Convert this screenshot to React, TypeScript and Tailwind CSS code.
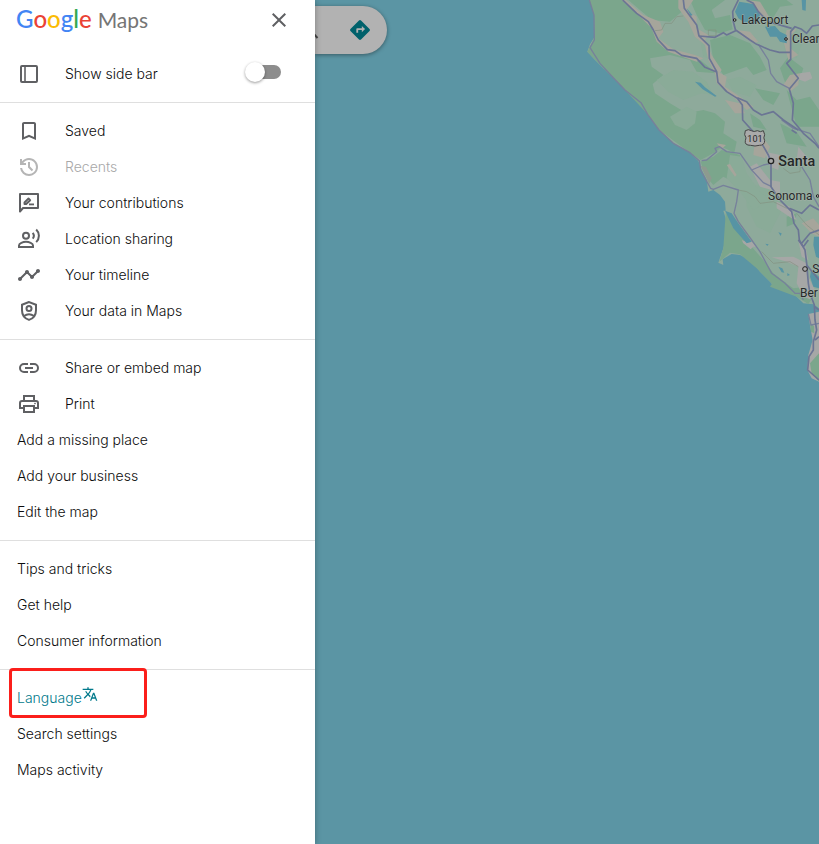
import type { ReactNode } from 'react';
import { MdBookmarkBorder, MdClose, MdTimeline, MdTranslate } from 'react-icons/md';

const symbol = 'h-6 w-6 shrink-0 fill-current';

function SideBarIcon() {
  return (
    <svg viewBox="0 0 24 24" className="h-6 w-6 shrink-0" fill="none" stroke="currentColor" aria-hidden="true">
      <rect x="4" y="4" width="16" height="16" rx="1" strokeWidth="2" />
      <path d="M8 4v16" strokeWidth="1.600" />
    </svg>
  );
}

function HistoryIcon() {
  return (
    <svg viewBox="0 -960 960 960" className={symbol} aria-hidden="true">
      <path d="M480-120q-138 0-240.500-91.500T122-440h82q14 104 92.500 172T480-200q117 0 198.500-81.500T760-480q0-117-81.500-198.500T480-760q-69 0-129 32t-101 88h110v80H120v-240h80v94q51-64 124.500-99T480-840q75 0 140.500 28.500t114 77q48.500 48.500 77 114T840-480q0 75-28.500 140.500t-77 114q-48.500 48.500-114 77T480-120Zm112-192L440-464v-216h80v184l128 128-56 56Z" />
    </svg>
  );
}

function ContributionIcon() {
  return (
    <svg viewBox="0 0 24 24" className="h-6 w-6 shrink-0" fill="none" stroke="currentColor" aria-hidden="true">
      <path d="M3 20.500V3h18v14H6z" strokeWidth="2" strokeLinejoin="round" />
      <path d="M7.500 13v-1.500l4-4 1.700 1.700-4 3.800z" strokeWidth="1.900" strokeLinejoin="round" />
      <path d="M12 13.400h5" strokeWidth="1.800" />
    </svg>
  );
}

function SharingIcon() {
  return (
    <svg viewBox="0 0 24 24" className="h-6 w-6 shrink-0" fill="none" stroke="currentColor" strokeWidth="2" aria-hidden="true">
      <circle cx="9" cy="8.800" r="3" />
      <path d="M2 20v-1.500c0-2.300 4-3.700 7-3.700s7 1.400 7 3.700V20z" />
      <path d="M15.700 5.900c1.500 1.800 1.500 4 0 5.800M19.200 2.500c3.600 3.500 3.600 9 0 12.600" />
    </svg>
  );
}

function ShieldIcon() {
  return (
    <svg viewBox="0 0 24 24" className="h-6 w-6 shrink-0" fill="none" stroke="currentColor" strokeWidth="2" aria-hidden="true">
      <path d="M12 3 5 5.700v5.500c0 4.500 2.900 8.300 7 9.700 4.100-1.400 7-5.200 7-9.700V5.700z" />
      <circle cx="12" cy="9.600" r="2.500" />
      <path d="M7 17c3-2.200 7-2.200 10 0" />
    </svg>
  );
}

function LinkIcon() {
  return (
    <svg viewBox="0 0 24 24" className="h-6 w-6 shrink-0" fill="none" stroke="currentColor" strokeWidth="2" aria-hidden="true">
      <path d="M11 8H7a4 4 0 0 0 0 8h4M13 8h4a4 4 0 0 1 0 8h-4M8 12h8" />
    </svg>
  );
}

function PrintIcon() {
  return (
    <svg viewBox="0 0 24 24" className="h-6 w-6 shrink-0" fill="none" stroke="currentColor" strokeWidth="2" aria-hidden="true">
      <path d="M7 8V4h10v4M7 16H3v-5a2 2 0 0 1 2-2h14a2 2 0 0 1 2 2v5h-4" />
      <path d="M7 14h10v6H7z" />
      <circle cx="18" cy="11.500" r="0.500" strokeWidth="1" />
    </svg>
  );
}

function Item({ icon, children, disabled = false }: { icon?: ReactNode; children: ReactNode; disabled?: boolean }) {
  return (
    <li>
      <button
        type="button"
        disabled={disabled}
        className={`flex h-9 w-full items-center px-[17px] text-left ${disabled ? 'text-[#a8a8a8]' : 'text-[#0c0c0c]'}`}
      >
        {icon && <span className={`mr-6 ${disabled ? 'text-[#b5b5b5]' : 'text-[#5f6063]'}`}>{icon}</span>}
        {children}
      </button>
    </li>
  );
}

function Group({ children }: { children: ReactNode }) {
  return <ul className="border-t border-[#dfdfdf] py-[10px]">{children}</ul>;
}

function Terrain() {
  return (
    <svg
      viewBox="0 0 717 1170"
      className="absolute top-0 right-0 h-[390px] w-[239px]"
      role="img"
      aria-label="Northern California coast"
    >
      <path
        fill="#8eaa9b"
        d="M28 0 42 45 44 110 30 133 22 155 45 180 70 205 105 230 140 275 185 310 205 345 235 388 280 430 330 458 355 483 365 510 380 540 385 575 400 570 420 585 435 605 437 632 430 632 445 680 430 745 415 788 430 795 428 778 455 762 480 765 515 782 540 815 570 845 585 863 600 853 625 870 650 890 670 910 700 913 717 925V0z"
      />
      <g fill="#7ba68c">
        <path d="M28 0 42 45 44 110 22 155 70 205 140 275 205 345 235 388 330 458 362 480 408 455 425 440 463 458 470 425 430 400 435 365 405 340 370 330 320 340 270 310 225 280 218 252 250 225 215 200 210 175 270 165 330 180 350 215 410 220 352 173 265 150 235 120 225 80 180 45 130 0z" />
        <path d="M145 0 215 60 270 65 305 35 309 0zM330 0 350 45 375 90 420 100 458 88 450 45 405 55 395 30 435 0zM390 120 450 105 510 130 540 170 560 210 520 225 500 200 430 225 400 180z" />
        <path d="M362 485 400 470 425 450 480 465 475 515 450 540 430 530 400 555 375 525zM437 640 430 745 418 785 450 758 480 763 530 805 585 860 620 850 580 820 550 780 515 740 480 690zM500 0 540 45 575 60 600 20 640 15 620 0zM600 205 625 170 670 205 655 250 620 260zM620 270 650 300 690 290 717 330V380H650zM525 265 600 280 580 315 550 300zM570 860 650 890 685 912 700 890 680 860 640 865 590 830z" />
        <path d="M620 650 650 640 645 670 620 680zM510 340 540 360 560 390 520 380zM600 370 650 395 680 440 620 430z" />
      </g>
      <g fill="#8aab98">
        <path d="M230 240 280 210 340 215 380 245 400 285 365 280 310 300 265 275zM270 350 320 320 350 335 345 370 320 390 285 375zM440 240 480 230 530 255 510 290 460 275zM600 90 640 80 670 120 650 175 615 150zM500 560 590 550 610 620 570 700 530 680 500 620z" />
        <path d="M450 465 485 470 500 520 540 575 570 600 520 630 480 575 440 535zM360 120 390 150 400 180 370 170z" />
      </g>
      <g fill="#a6a59b">
        <path d="M138 0 190 45 240 65 250 95 235 115 280 148 345 165 370 175 350 185 265 155 230 125 215 85 175 45 125 0zM295 0 340 0 320 30 350 50 350 85 385 105 375 120 395 165 425 210 410 230 385 180 375 135 345 110 325 65 295 25z" />
        <path d="M405 210 440 230 435 260 480 290 520 320 500 330 470 300 410 250zM435 300 480 310 495 340 465 340zM470 90 510 95 535 125 520 130 480 105zM620 90 650 88 630 110 632 145 655 165 625 180 612 130zM500 0 540 5 570 55 540 50zM630 225 660 220 655 255 630 275 610 255z" />
        <path d="M525 420 550 415 570 440 555 475 520 465zM665 670 700 655 717 675V710L695 700zM410 430 438 435 425 447zM440 495 450 492 470 525 465 530z" />
      </g>
      <path fill="#8d9a8f" d="M362 498 378 500 395 535 388 552z" />
      <g fill="#a6a7a6">
        <path d="M510 500 530 490 570 540 600 545 600 590 575 570 540 560zM590 605 630 620 650 660 635 655 590 625zM555 455 600 465 595 510 570 500zM660 220 690 215 697 235 675 245 655 238zM655 440 680 470 700 485 690 500 650 480z" />
        <path d="M485 720 525 735 512 748 490 730zM575 772 640 770 680 790 685 830 705 870 690 898 670 890 650 850 655 800 620 785zM655 720 675 735 685 780 665 770zM480 700 500 710 530 740 515 740z" />
      </g>
      <g fill="#5794a4">
        <path d="M478 5 520 12 540 45 530 70 500 72 475 55 465 35zM555 80 585 78 600 95 620 105 620 130 600 125 590 110 570 110zM665 0 678 0 677 32 667 30zM435 632 455 640 475 670 515 725 500 730 460 685zM345 245 362 248 375 262 410 288 405 290 368 268z" />
        <path d="M320 25 338 45 332 48zM717 710V775L708 770 700 735 702 710zM693 810 717 830V865L700 860 690 830zM595 800 607 805 613 818 605 817zM556 731 566 733 562 738zM595 697 605 700 602 708zM622 819 630 825 622 828z" />
      </g>
      <path fill="#a6a7a6" d="M685 942 717 935V1145L695 1135 682 1110 685 1065 698 1020 690 975z" />
      <path fill="#7ba68c" d="M690 970 702 978 703 1000 693 995zM690 1090 717 1060V1145L695 1120z" />
      <g fill="none" stroke="#82917f" strokeWidth="3" opacity=".65">
        <path d="M225 92 245 90 255 70 275 70 290 50 310 48M385 105V90H408V107H385M475 570 500 575 525 590 540 610 580 605 620 625M610 505 630 520 660 515 662 490M545 755 580 790 630 785 655 800M650 640 680 675 717 705" />
      </g>
      <g fill="none" stroke="#77819b" strokeWidth="4" strokeLinejoin="round">
        <path d="M28 0 42 45 43 120 30 143 60 190 95 228 135 270 183 308 203 343 237 390 280 430 330 458 358 482 362 510 378 540 392 565 400 568 430 556 475 570 470 605 462 640 475 665 515 720 540 755 575 820 615 850 645 880 660 880 670 900" />
        <path d="M365 482 380 480 410 455 405 445 418 440 440 455 480 460 515 510 550 548 575 560M515 510 550 495 573 490M535 133 565 180 572 220 590 245 628 265M605 360 640 385 690 400 717 440M665 500 690 540 700 590 717 620M685 942 693 975 717 970" />
      </g>
      <g fill="none" stroke="#6b7594" strokeWidth="5" strokeLinejoin="round">
        <path d="M128 0 170 40 205 65 220 90 235 120 262 149 285 152 305 166 350 175 375 202 410 216M310 0 313 25 350 75 357 108 387 137 388 175 410 215 414 247 440 275 472 295 487 315 488 360 515 390 545 430 565 465 573 485V560L600 600 635 635 642 670 655 690 658 720 675 750 680 790 685 850 690 880 703 915 705 960 710 990 700 1025 700 1050 687 1070 683 1110 717 1140" />
        <path d="M357 108 405 112 430 98 440 105 467 92 460 65 458 35 475 0M467 90 510 120 530 133 570 150 598 157 632 157 632 178 620 190 655 235 628 267 640 310 637 360 670 400 705 430 717 445M632 157V95L645 80 665 88 680 100 697 78 717 75M500 0 520 10 535 35 565 65 635 85M472 293 500 305 520 330 545 345 580 335 610 360 655 390M635 390 650 400M628 625 665 640 690 615 717 630M665 730 690 700 717 690M655 720 670 740 685 720M680 795 717 840M703 920 717 930M705 1020 717 1010" />
      </g>
      <path d="M496 392q10-6 18 0 8 5 18 0 10 6 18 0l4 12q-5 10 0 18 0 14-16 14l-13 2-13-2q-19 0-16-14 5-8-2-18z" fill="#aaaaaa" stroke="#444" strokeWidth="3" />
      <g fill="#aaa" stroke="#222" strokeWidth="3">
        <circle cx="464" cy="60" r="4" />
        <circle cx="618" cy="117" r="4" />
        <circle cx="573" cy="483" r="8" strokeWidth="4" />
        <circle cx="713" cy="588" r="4" />
        <circle cx="675" cy="807" r="7" />
      </g>
      <g fill="#252829" fontFamily="Roboto, sans-serif" fontSize="36" fontWeight="400" stroke="#a4b2a9" strokeWidth="3" paintOrder="stroke">
        <text x="484" y="72">Lakeport</text>
        <text x="636" y="129">Clear</text>
        <text x="502" y="426" fontSize="27" strokeWidth="0">101</text>
        <text x="595" y="497" fontSize="43" fontWeight="500">Santa</text>
        <text x="564" y="600">Sonoma</text>
        <text x="697" y="819">S</text>
        <text x="660" y="890">Ber</text>
      </g>
    </svg>
  );
}

function Logo() {
  return (
    <h1 className="flex items-baseline gap-[6px] pb-[2px] font-[Lato,sans-serif] leading-8">
      <span className="text-2xl leading-8 font-medium text-[#4285f4]">
        G<span className="text-[#ea4335]">o</span>
        <span className="text-[#fbbc04]">o</span>g<span className="text-[#34a853]">l</span>
        <span className="text-[#ea4335]">e</span>
      </span>
      <span className="text-[21px] font-normal text-[#757575]">Maps</span>
    </h1>
  );
}

export default function App() {
  return (
    <div className="flex min-h-screen bg-[#5b95a4] font-[Inter,sans-serif] text-sm font-light">
      <nav aria-label="Main menu" className="z-10 w-[315px] shrink-0 bg-white shadow-[0_0_6px_rgba(0,0,0,0.3)]">
        <header className="flex h-10 items-center justify-between pr-6 pl-4">
          <Logo />
          <button type="button" aria-label="Close" className="text-[#5f6063]">
            <MdClose className="h-6 w-6" />
          </button>
        </header>
        <label className="mt-4 mb-[10px] flex h-9 items-center pr-[34px] pl-[17px] text-[#0c0c0c]">
          <span className="mr-6 text-[#5f6063]">
            <SideBarIcon />
          </span>
          <span className="flex-1">Show side bar</span>
          <input
            type="checkbox"
            role="switch"
            className="mb-1 h-[14px] w-8 appearance-none rounded-full bg-[#8d8d8d] before:-mt-[3px] before:-ml-1 before:block before:h-5 before:w-5 before:rounded-full before:bg-white before:shadow-[0_1px_3px_rgba(0,0,0,0.4)] checked:before:ml-4"
          />
        </label>
        <Group>
          <Item icon={<MdBookmarkBorder className="h-6 w-6" />}>Saved</Item>
          <Item icon={<HistoryIcon />} disabled>Recents</Item>
          <Item icon={<ContributionIcon />}>Your contributions</Item>
          <Item icon={<SharingIcon />}>Location sharing</Item>
          <Item icon={<MdTimeline className="h-6 w-6" />}>Your timeline</Item>
          <Item icon={<ShieldIcon />}>Your data in Maps</Item>
        </Group>
        <Group>
          <Item icon={<LinkIcon />}>Share or embed map</Item>
          <Item icon={<PrintIcon />}>Print</Item>
          <Item>Add a missing place</Item>
          <Item>Add your business</Item>
          <Item>Edit the map</Item>
        </Group>
        <Group>
          <Item>Tips and tricks</Item>
          <Item>Get help</Item>
          <Item>Consumer information</Item>
        </Group>
        <Group>
          <Item>
            <span className="relative flex text-[#00798b]">
              Language
              <MdTranslate className="-mt-0.5 h-4 w-4" />
              <span className="pointer-events-none absolute -top-5 -left-2 h-[50px] w-[138px] rounded border-3 border-[#fb1f1b]" />
            </span>
          </Item>
          <Item>Search settings</Item>
          <Item>Maps activity</Item>
        </Group>
      </nav>
      <main className="relative flex-1 overflow-hidden">
        <Terrain />
        <div className="mt-[6px] flex h-12 w-[72px] items-center justify-between rounded-r-full bg-[#b2b2b2] pr-4 shadow-[0_1px_4px_rgba(0,0,0,0.4)]">
          <svg viewBox="0 0 4 24" className="h-6 w-1" aria-hidden="true">
            <path d="m-2 15 4.500 5" stroke="#444" strokeWidth="2" />
          </svg>
          <button type="button" aria-label="Directions">
            <svg viewBox="0 0 24 24" className="h-[22px] w-[22px]" aria-hidden="true">
              <path fill="#00616b" d="M22.400 10.900 13.100 1.600a1.600 1.600 0 0 0-2.200 0l-9.300 9.300a1.600 1.600 0 0 0 0 2.200l9.300 9.300a1.600 1.600 0 0 0 2.200 0l9.300-9.300a1.600 1.600 0 0 0 0-2.200z" />
              <path fill="#b2b2b2" d="M14 14.500V12h-4v3H8v-4a1 1 0 0 1 1-1h5V7.500l3.500 3.500z" />
            </svg>
          </button>
        </div>
      </main>
    </div>
  );
}
